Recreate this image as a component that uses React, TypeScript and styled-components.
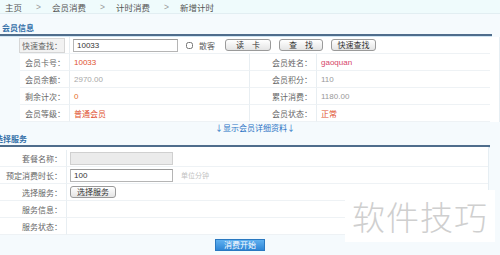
import React from 'react';
import styled, { createGlobalStyle } from 'styled-components';

const GlobalStyle = createGlobalStyle`
	html, body {
		margin: 0;
		padding: 0;
		background: #f5fafd;
	}
	body {
		width: 500px;
		height: 255px;
		overflow: hidden;
		font-family: 'Noto Sans CJK SC', 'Liberation Sans', sans-serif;
		font-size: 8px;
		color: #666;
	}
`;

const crumbs = ['主页', '会员消费', '计时消费', '新增计时'];

const memberRows = [
	{ l: '会员卡号：', v: '10033', c: '#e0502e', rl: '会员姓名：', rv: 'gaoquan', rc: '#d6456a' },
	{ l: '会员余额：', v: '2970.00', c: '#a8a8a8', rl: '会员积分：', rv: '110', rc: '#999' },
	{ l: '剩余计次：', v: '0', c: '#e6702e', rl: '累计消费：', rv: '1180.00', rc: '#999' },
	{ l: '会员等级：', v: '普通会员', c: '#e0502e', rl: '会员状态：', rv: '正常', rc: '#e0502e' },
];

export default function App() {
	return (
		<>
			<GlobalStyle />
			<Page>
				<Breadcrumb>
					{crumbs.map((c, i) => (
						<React.Fragment key={c}>
							{i > 0 && <Sep>&gt;</Sep>}
							<Crumb>{c}</Crumb>
						</React.Fragment>
					))}
				</Breadcrumb>

				<SectionTitle>会员信息</SectionTitle>
				<InfoTable>
					<LabelCell>
						<LabelBox>快速查找：</LabelBox>
					</LabelCell>
					<SearchCell>
						<TextInput width={105} defaultValue="10033" />
						<Check type="checkbox" />
						<span>散客</span>
						<GreyButton width={46}>读　卡</GreyButton>
						<GreyButton width={44}>查　找</GreyButton>
						<GreyButton width={45}>快速查找</GreyButton>
					</SearchCell>
					{memberRows.map((r) => (
						<React.Fragment key={r.l}>
							<LabelCell>{r.l}</LabelCell>
							<ValueCell color={r.c}>{r.v}</ValueCell>
							<LabelCell>{r.rl}</LabelCell>
							<ValueCell color={r.rc} last>
								{r.rv}
							</ValueCell>
						</React.Fragment>
					))}
				</InfoTable>
				<DetailLink>↓显示会员详细资料↓</DetailLink>

				<SectionTitle shift={-5}>选择服务</SectionTitle>
				<ServiceTable>
					<SLabel>套餐名称：</SLabel>
					<SValue>
						<TextInput width={103} disabled />
					</SValue>
					<SLabel>预定消费时长：</SLabel>
					<SValue>
						<TextInput width={103} defaultValue="100" />
						<Hint>单位分钟</Hint>
					</SValue>
					<SLabel>选择服务：</SLabel>
					<SValue>
						<GreyButton width={46}>选择服务</GreyButton>
					</SValue>
					<SLabel>服务信息：</SLabel>
					<SValue />
					<SLabel>服务状态：</SLabel>
					<SValue />
				</ServiceTable>
				<Footer>
					<BlueButton>消费开始</BlueButton>
				</Footer>

				<Watermark>软件技巧</Watermark>
			</Page>
		</>
	);
}

const Page = styled.div`
	position: relative;
	width: 500px;
	height: 255px;
`;

const Breadcrumb = styled.div`
	display: flex;
	align-items: center;
	height: 13px;
	padding-left: 5px;
	background: #effbfc;
	border-bottom: 1px solid #e2eef2;
	font-size: 8.5px;
	color: #555;
`;

const Crumb = styled.span`
	white-space: nowrap;
`;

const Sep = styled.span`
	margin: 0 11px 0 14px;
	color: #999;
	font-family: 'Liberation Sans', sans-serif;
`;

const SectionTitle = styled.div<{ shift?: number }>`
	height: 12px;
	line-height: 12px;
	margin-top: ${({ shift }) => (shift ? '0' : '8px')};
	width: 490px;
	padding-left: ${({ shift }) => (shift ? 0 : 2)}px;
	text-indent: ${({ shift }) => shift || 0}px;
	overflow: hidden;
	font-size: 8px;
	font-weight: bold;
	color: #3470a8;
	border-bottom: 2px solid #4f6d8c;
	box-shadow: 0 1px 0 #cfe5f4;
	box-sizing: content-box;
`;

const InfoTable = styled.div`
	display: grid;
	grid-template-columns: 50px 180px 67px 173px;
	grid-auto-rows: 17px;
	margin-left: 20px;
	margin-top: 1px;
	background: #fff;
	border-right: 1px solid #e6eef3;
`;

const LabelCell = styled.div`
	display: flex;
	align-items: center;
	justify-content: flex-end;
	padding-right: 4px;
	border-bottom: 1px solid #eef2f5;
	border-right: 1px solid #e8eef2;
	white-space: nowrap;
	color: #666;
`;

const LabelBox = styled.span`
	padding: 1px 2px;
	margin-left: 6px;
	background: #f2f2f2;
	border: 1px solid #d6d6d6;
`;

const SearchCell = styled.div`
	grid-column: 2 / span 3;
	display: flex;
	align-items: center;
	gap: 4px;
	padding-left: 3px;
	border-bottom: 1px solid #eef2f5;
	color: #666;

	& > span {
		margin-right: 6px;
	}
`;

const ValueCell = styled.div<{ color: string; last?: boolean }>`
	display: flex;
	align-items: center;
	padding-left: 4px;
	color: ${({ color }) => color};
	border-bottom: 1px solid #eef2f5;
	border-right: ${({ last }) => (last ? 'none' : '1px solid #e8eef2')};
	font-family: 'Liberation Sans', 'Noto Sans CJK SC', sans-serif;
`;

const TextInput = styled.input<{ width: number }>`
	box-sizing: border-box;
	width: ${({ width }) => width}px;
	height: 13px;
	margin: 0;
	padding: 0 3px;
	font-size: 8px;
	font-family: 'Liberation Sans', sans-serif;
	color: #333;
	border: 1px solid #b5b5b5;
	border-top-color: #999;
	background: #fff;
	outline: none;

	&:disabled {
		background: #ebebeb;
		border-color: #d0d0d0;
	}
`;

const Check = styled.input`
	width: 7px;
	height: 7px;
	margin: 0 2px 0 4px;
`;

const GreyButton = styled.button<{ width: number }>`
	box-sizing: border-box;
	width: ${({ width }) => width}px;
	height: 12px;
	padding: 0;
	margin-right: 4px;
	font-size: 8px;
	font-family: 'Noto Sans CJK SC', sans-serif;
	color: #333;
	line-height: 10px;
	border: 1px solid #9a9a9a;
	border-radius: 3px;
	background: linear-gradient(#ffffff, #e4e4e4);
`;

const DetailLink = styled.div`
	height: 11px;
	line-height: 11px;
	text-align: center;
	color: #2a72c4;
	font-size: 8px;
	padding-left: 10px;
	width: 490px;
`;

const ServiceTable = styled.div`
	display: grid;
	grid-template-columns: 67px 421px;
	grid-auto-rows: 17px;
	padding-top: 3px;
	width: 488px;
	border-right: 1px solid #e6eef3;
	background: #fff;
`;

const SLabel = styled.div`
	display: flex;
	align-items: center;
	justify-content: flex-end;
	padding-right: 4px;
	border-bottom: 1px solid #eef2f5;
	border-right: 1px solid #e8eef2;
	white-space: nowrap;
`;

const SValue = styled.div`
	display: flex;
	align-items: center;
	gap: 8px;
	padding-left: 3px;
	border-bottom: 1px solid #eef2f5;
`;

const Hint = styled.span`
	color: #c2c2c2;
	font-size: 7px;
`;

const Footer = styled.div`
	display: flex;
	justify-content: center;
	width: 480px;
	padding-top: 4px;
`;

const BlueButton = styled.button`
	width: 50px;
	height: 12px;
	padding: 0;
	font-size: 8px;
	font-family: 'Noto Sans CJK SC', sans-serif;
	color: #fff;
	border: 1px solid #2a78c0;
	background: linear-gradient(#5fb0f0, #2f86d6);
	line-height: 10px;
`;

const Watermark = styled.div`
	position: absolute;
	left: 345px;
	top: 190px;
	width: 150px;
	height: 52px;
	display: flex;
	align-items: center;
	justify-content: center;
	background: #fff;
	font-family: 'Noto Sans CJK SC', sans-serif;
	font-weight: 300;
	font-size: 33px;
	color: #cfcfcf;
	letter-spacing: 1px;
`;
